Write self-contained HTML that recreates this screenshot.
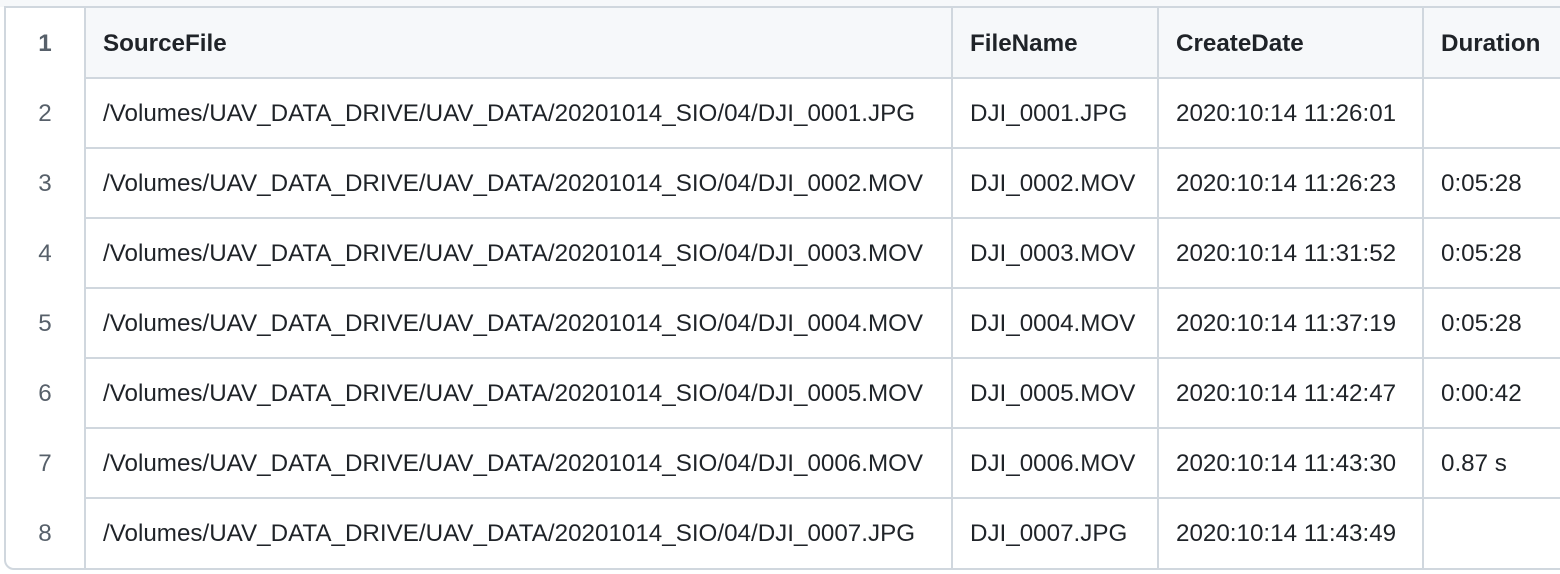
<!DOCTYPE html>
<html><head><meta charset="utf-8"><style>
body{margin:0;width:1560px;height:574px;overflow:hidden;background:#fff;font-family:"Liberation Sans",Arial,sans-serif;font-size:24.2px;color:#1f2328;position:relative}
.top{position:absolute;left:0;top:0;width:1560px;height:7px;background:#f6f8fa}
.box{position:absolute;left:4px;top:6px;width:1570px;height:560px;border:2px solid #d0d7de;border-radius:0 0 0 10px;box-sizing:content-box}
.hdr{position:absolute;left:86px;top:8px;width:1474px;height:70px;background:#f6f8fa}
.h{position:absolute;height:2px;background:#d0d7de;left:85px;right:0}
.v{position:absolute;width:2px;background:#d0d7de;top:8px;height:560px}
.t{position:absolute;line-height:24px;white-space:nowrap}
.n{position:absolute;width:80px;left:5px;text-align:center;color:#57606a;line-height:24px}
.b{font-weight:bold}
</style></head><body>
<div class="top"></div>
<div class="hdr"></div>
<div class="box"></div>
<div class="v" style="left:84px"></div>
<div class="v" style="left:951px"></div>
<div class="v" style="left:1157px"></div>
<div class="v" style="left:1422px"></div>
<div class="h" style="top:77px"></div>
<div class="h" style="top:147px"></div>
<div class="h" style="top:217px"></div>
<div class="h" style="top:287px"></div>
<div class="h" style="top:357px"></div>
<div class="h" style="top:427px"></div>
<div class="h" style="top:497px"></div>

<div class="n b" style="top:32px">1</div>
<div class="t b" style="left:103px;top:32px">SourceFile</div>
<div class="t b" style="left:970px;top:32px">FileName</div>
<div class="t b" style="left:1176px;top:32px">CreateDate</div>
<div class="t b" style="left:1441px;top:32px">Duration</div>

<div class="n" style="top:102px">2</div>
<div class="t" style="left:103px;top:102px">/Volumes/UAV_DATA_DRIVE/UAV_DATA/20201014_SIO/04/DJI_0001.JPG</div>
<div class="t" style="left:970px;top:102px">DJI_0001.JPG</div>
<div class="t" style="left:1176px;top:102px">2020:10:14 11:26:01</div>

<div class="n" style="top:172px">3</div>
<div class="t" style="left:103px;top:172px">/Volumes/UAV_DATA_DRIVE/UAV_DATA/20201014_SIO/04/DJI_0002.MOV</div>
<div class="t" style="left:970px;top:172px">DJI_0002.MOV</div>
<div class="t" style="left:1176px;top:172px">2020:10:14 11:26:23</div>
<div class="t" style="left:1441px;top:172px">0:05:28</div>

<div class="n" style="top:242px">4</div>
<div class="t" style="left:103px;top:242px">/Volumes/UAV_DATA_DRIVE/UAV_DATA/20201014_SIO/04/DJI_0003.MOV</div>
<div class="t" style="left:970px;top:242px">DJI_0003.MOV</div>
<div class="t" style="left:1176px;top:242px">2020:10:14 11:31:52</div>
<div class="t" style="left:1441px;top:242px">0:05:28</div>

<div class="n" style="top:312px">5</div>
<div class="t" style="left:103px;top:312px">/Volumes/UAV_DATA_DRIVE/UAV_DATA/20201014_SIO/04/DJI_0004.MOV</div>
<div class="t" style="left:970px;top:312px">DJI_0004.MOV</div>
<div class="t" style="left:1176px;top:312px">2020:10:14 11:37:19</div>
<div class="t" style="left:1441px;top:312px">0:05:28</div>

<div class="n" style="top:382px">6</div>
<div class="t" style="left:103px;top:382px">/Volumes/UAV_DATA_DRIVE/UAV_DATA/20201014_SIO/04/DJI_0005.MOV</div>
<div class="t" style="left:970px;top:382px">DJI_0005.MOV</div>
<div class="t" style="left:1176px;top:382px">2020:10:14 11:42:47</div>
<div class="t" style="left:1441px;top:382px">0:00:42</div>

<div class="n" style="top:452px">7</div>
<div class="t" style="left:103px;top:452px">/Volumes/UAV_DATA_DRIVE/UAV_DATA/20201014_SIO/04/DJI_0006.MOV</div>
<div class="t" style="left:970px;top:452px">DJI_0006.MOV</div>
<div class="t" style="left:1176px;top:452px">2020:10:14 11:43:30</div>
<div class="t" style="left:1441px;top:452px">0.87 s</div>

<div class="n" style="top:522px">8</div>
<div class="t" style="left:103px;top:522px">/Volumes/UAV_DATA_DRIVE/UAV_DATA/20201014_SIO/04/DJI_0007.JPG</div>
<div class="t" style="left:970px;top:522px">DJI_0007.JPG</div>
<div class="t" style="left:1176px;top:522px">2020:10:14 11:43:49</div>
</body></html>
